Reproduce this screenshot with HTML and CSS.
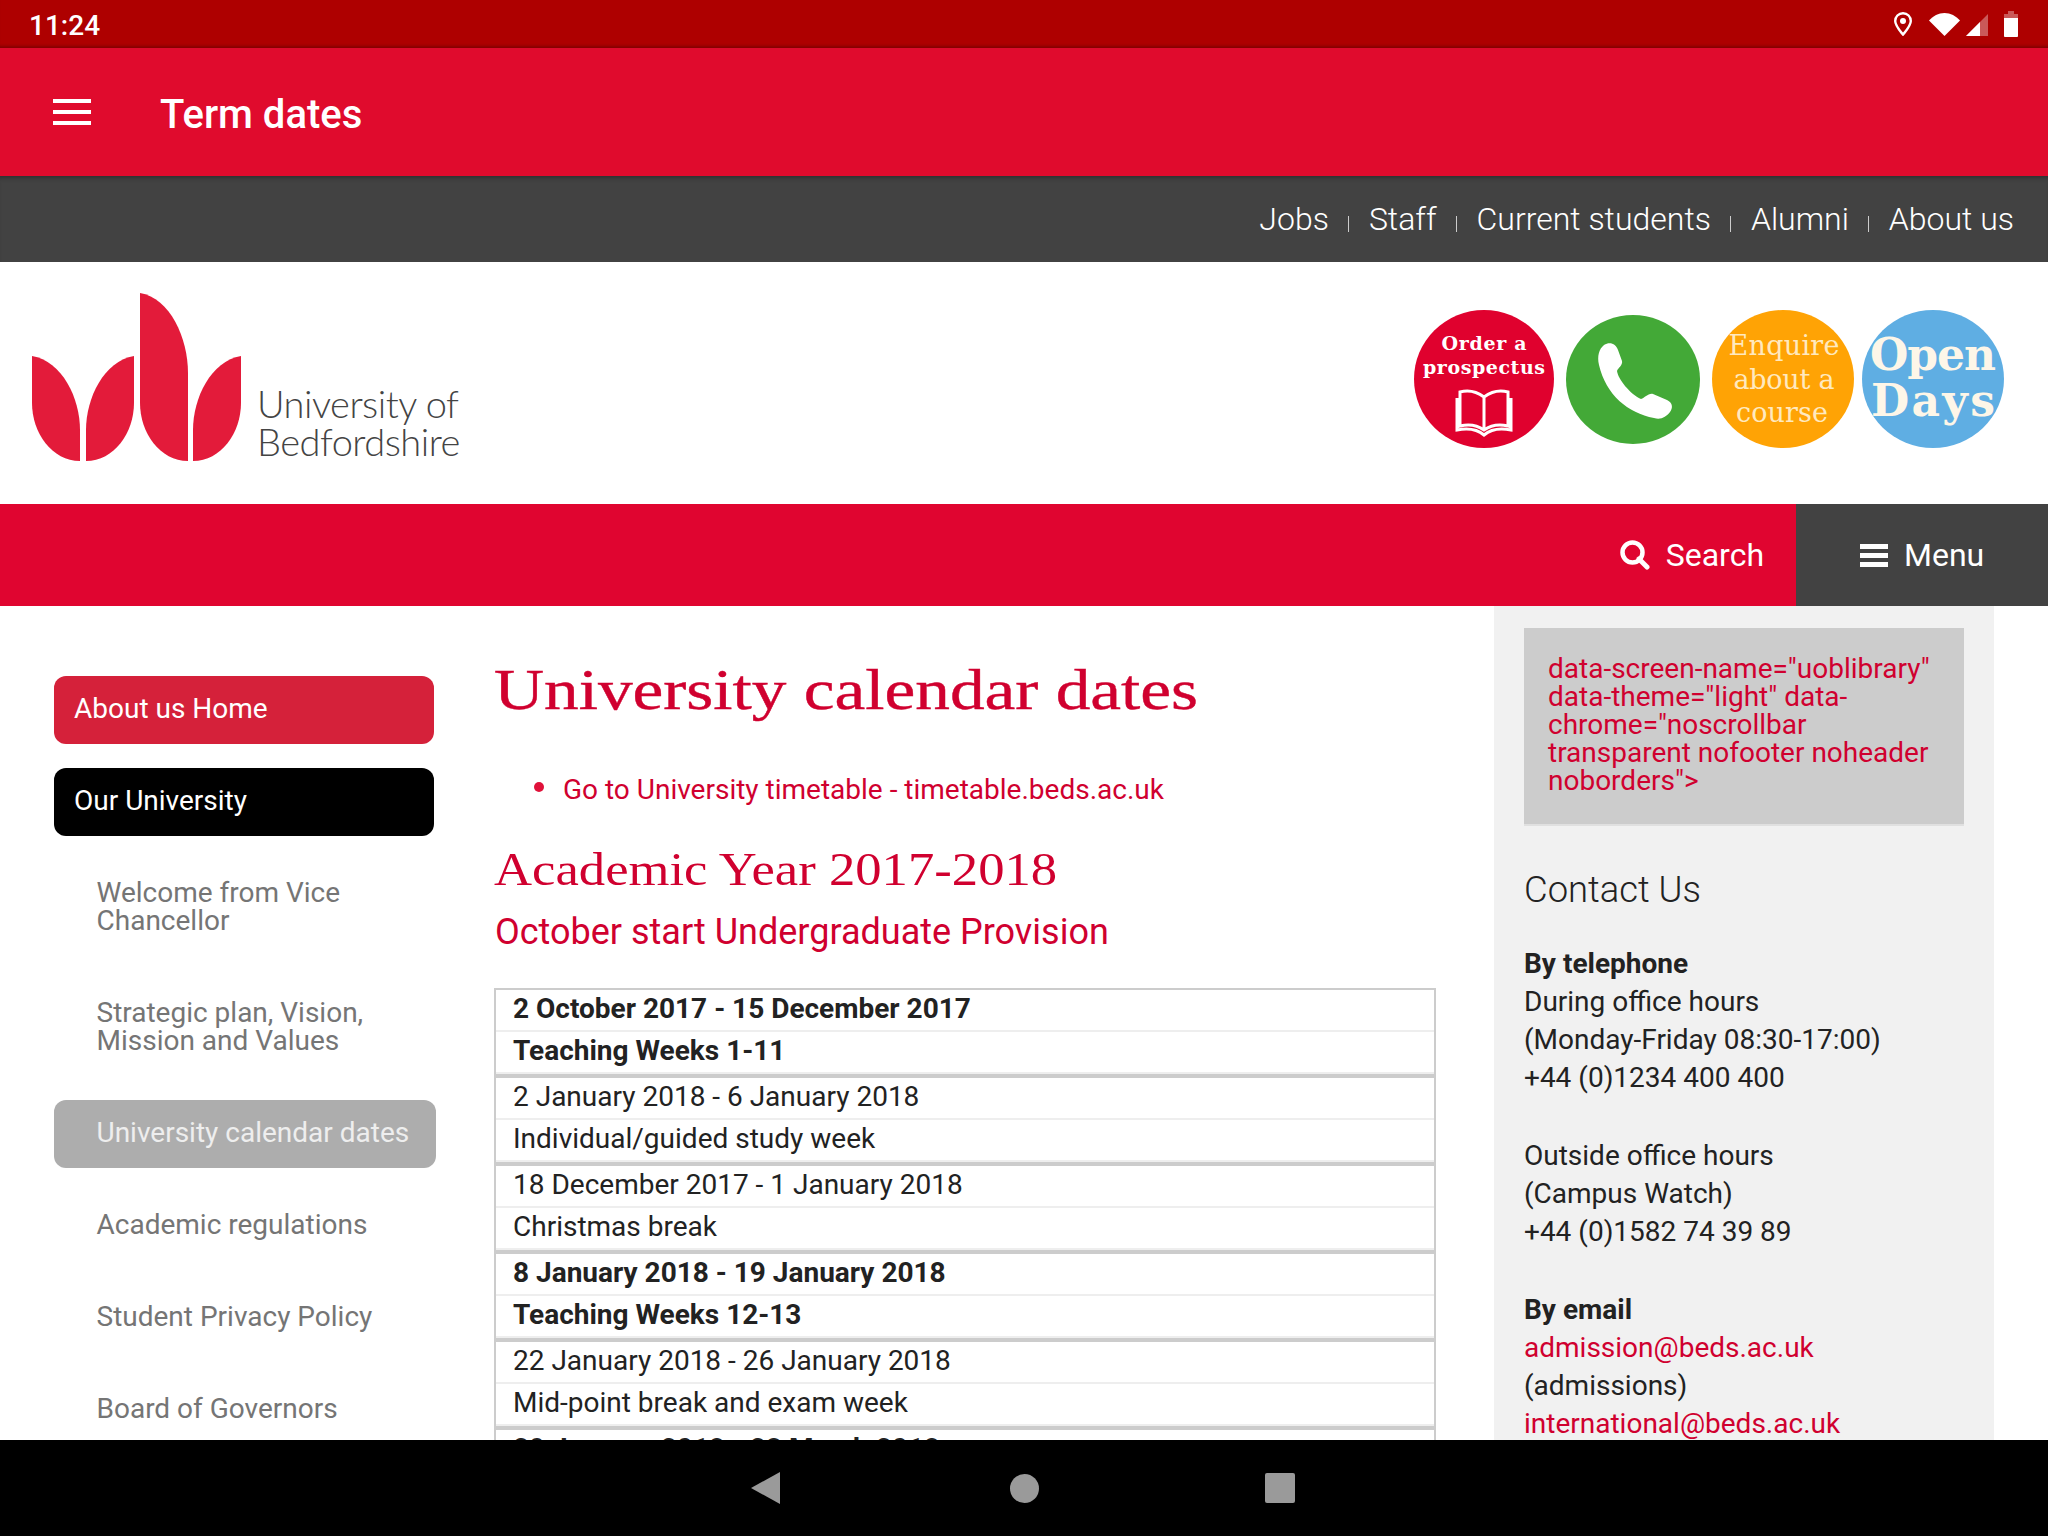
FILE: index.html
```html
<!DOCTYPE html>
<html lang="en">

<head>
    <meta charset="UTF-8">
    <title>Term dates</title>
    <link rel="stylesheet" href="styles.css">
</head>

<body>
    <div class="screen">
        <div class="status-bar">
            <span class="clock">11:24</span>
            <div class="status-icons">
                <svg class="ic-pin" viewBox="0 0 18 24"><path d="M9 1.2C4.5 1.2 1.2 4.7 1.2 9c0 4.6 4.6 9.6 7.8 13.6C12.200 18.600 16.800 13.600 16.800 9 16.800 4.700 13.500 1.200 9 1.200Z" fill="none" stroke="#fff" stroke-width="2.400"/><circle cx="9" cy="9" r="3" fill="#fff"/></svg>
                <svg class="ic-wifi" viewBox="0 0 31 23"><path d="M0 7.500C4 3 9.500 0 15.500 0S27 3 31 7.500L15.500 23Z" fill="#fff"/></svg>
                <svg class="ic-signal" viewBox="0 0 22 22"><path d="M0 22 22 0V22Z" fill="#fff" opacity=".35"/><path d="M0 22 14 8V22Z" fill="#fff"/></svg>
                <svg class="ic-battery" viewBox="0 0 14 26"><path d="M4 0H10V3H14V7H0V3H4Z" fill="#fff" opacity=".35"/><path d="M0 7H14V25C14 25.500 13.500 26 13 26H1C.5 26 0 25.500 0 25Z" fill="#fff"/></svg>
            </div>
        </div>

        <div class="app-bar">
            <div class="burger"><span></span><span></span><span></span></div>
            <div class="app-title">Term dates</div>
        </div>

        <div class="top-links">
            <a>Jobs</a><i></i><a>Staff</a><i></i><a>Current students</a><i></i><a>Alumni</a><i></i><a>About us</a>
        </div>

        <div class="masthead">
            <div class="logo">
                <svg class="logo-mark" viewBox="0 0 209 168">
                    <path d="M0 63C30 68 48 105 48 137V168C20 168 0 140 0 110Z" />
                    <path d="M102 63C72 68 54 105 54 137V168C82 168 102 140 102 110Z" />
                    <path d="M108 0C138 5 156 45 156 80V168C128 168 108 140 108 110Z" />
                    <path d="M209 63C179 68 161 105 161 137V168C189 168 209 140 209 110Z" />
                </svg>
                <div class="logo-text">University of<br>Bedfordshire</div>
            </div>
            <div class="badges">
                <svg class="badge-red" viewBox="0 0 140 138">
                    <ellipse cx="70" cy="69" rx="70" ry="69" fill="#e0012e" />
                    <text x="70" y="40" class="bd-small" text-anchor="middle" textLength="85">Order a</text>
                    <text x="70" y="64" class="bd-small" text-anchor="middle" textLength="122">prospectus</text>
                    <path d="M70 87C62 81 53 80 46 82V116C54 114 63 115 70 120C77 115 86 114 94 116V82C87 80 78 81 70 87ZM70 87V120M43 88V120C53 118 63 119 70 125C77 119 87 118 97 120V88" fill="none" stroke="#fff" stroke-width="3" />
                </svg>
                <svg class="badge-green" viewBox="0 0 134 129">
                    <ellipse cx="67" cy="64.500" rx="67" ry="64.500" fill="#43a937" />
                    <path d="M38 30C44 26 50 29 52 35L56 46C57 50 52 53 51 56C52 64 64 79 75 84C79 83 82 78 87 79L101 85C107 88 107 93 104 97C100 102 95 105 88 103C62 98 40 80 33 50C31 41 33 34 38 30Z" fill="#fff" />
                </svg>
                <svg class="badge-orange" viewBox="0 0 142 138">
                    <ellipse cx="71" cy="69" rx="71" ry="69" fill="#ffa305" />
                    <text x="72" y="45" class="bd-light" text-anchor="middle" textLength="111">Enquire</text>
                    <text x="72" y="79" class="bd-light" text-anchor="middle" textLength="101">about a</text>
                    <text x="70" y="112" class="bd-light" text-anchor="middle" textLength="92">course</text>
                </svg>
                <svg class="badge-blue" viewBox="0 0 142 138">
                    <ellipse cx="71" cy="69" rx="71" ry="69" fill="#5faee3" />
                    <text x="71" y="60" class="bd-big" text-anchor="middle" textLength="126">Open</text>
                    <text x="71" y="106" class="bd-big" text-anchor="middle" textLength="124">Days</text>
                </svg>
            </div>
        </div>

        <div class="red-bar">
            <div class="search-btn">
                <svg class="ic-search" viewBox="0 0 30 30"><circle cx="12.500" cy="12.500" r="10" fill="none" stroke="#fff" stroke-width="4.500"/><path d="M19 19 27 27" stroke="#fff" stroke-width="5" stroke-linecap="round"/></svg>
                Search
            </div>
            <div class="menu-btn">
                <div class="menu-lines"><span></span><span></span><span></span></div>
                Menu
            </div>
        </div>

        <div class="content">
            <nav class="side">
                <a class="side-item is-red">About us Home</a>
                <a class="side-item is-black">Our University</a>
                <a class="side-item sub">Welcome from Vice Chancellor</a>
                <a class="side-item sub">Strategic plan, Vision, Mission and Values</a>
                <a class="side-item sub is-current">University calendar dates</a>
                <a class="side-item sub">Academic regulations</a>
                <a class="side-item sub">Student Privacy Policy</a>
                <a class="side-item sub">Board of Governors</a>
            </nav>

            <main class="main">
                <h1>University calendar dates</h1>
                <ul class="links">
                    <li>Go to University timetable - timetable.beds.ac.uk</li>
                </ul>
                <h2>Academic Year 2017-2018</h2>
                <h3>October start Undergraduate Provision</h3>
                <table class="dates">
                    <tr class="strong"><td>2 October 2017 - 15 December 2017</td></tr>
                    <tr class="strong end"><td>Teaching Weeks 1-11</td></tr>
                    <tr><td>2 January 2018 - 6 January 2018</td></tr>
                    <tr class="end"><td>Individual/guided study week</td></tr>
                    <tr><td>18 December 2017 - 1 January 2018</td></tr>
                    <tr class="end"><td>Christmas break</td></tr>
                    <tr class="strong"><td>8 January 2018 - 19 January 2018</td></tr>
                    <tr class="strong end"><td>Teaching Weeks 12-13</td></tr>
                    <tr><td>22 January 2018 - 26 January 2018</td></tr>
                    <tr class="end"><td>Mid-point break and exam week</td></tr>
                    <tr class="strong"><td>29 January 2018 - 23 March 2018</td></tr>
                </table>
            </main>

            <aside class="aside">
                <div class="embed">data-screen-name="uoblibrary" data-theme="light" data-chrome="noscrollbar transparent nofooter noheader noborders"&gt;</div>
                <h4>Contact Us</h4>
                <p><b>By telephone</b><br>During office hours<br>(Monday-Friday 08:30-17:00)<br>+44 (0)1234 400 400</p>
                <p>Outside office hours<br>(Campus Watch)<br>+44 (0)1582 74 39 89</p>
                <p><b>By email</b><br><a>admission@beds.ac.uk</a><br>(admissions)<br><a>international@beds.ac.uk</a></p>
            </aside>
        </div>

        <div class="nav-bar">
            <svg class="nav-back" viewBox="0 0 29 32"><path d="M29 0V32L0 16Z" /></svg>
            <span class="nav-home"></span>
            <span class="nav-recent"></span>
        </div>
    </div>
</body>

</html>
```

FILE: styles.css
```css
* {
    box-sizing: border-box;
}

body {
    margin: 0;
    font-family: 'Roboto', sans-serif;
    color: #222;
    background-color: #fff;
}

.screen {
    width: 2048px;
    height: 1536px;
    display: flex;
    flex-direction: column;
    overflow: hidden;
}

/* status bar */
.status-bar {
    height: 48px;
    flex: none;
    background-color: #ae0000;
    box-shadow: inset 0 -4px 3px -2px rgba(0, 0, 0, 0.25);
    display: flex;
    align-items: center;
    justify-content: space-between;
    padding: 0 30px 0 29px;
    color: #fff;
}

.clock {
    margin-top: 2px;
    font-size: 28px;
    font-weight: 500;
}

.status-icons {
    display: flex;
    align-items: center;
}

.ic-pin {
    width: 18px;
    height: 24px;
    margin-right: 17px;
}

.ic-wifi {
    width: 31px;
    height: 23px;
    margin-right: 6px;
}

.ic-signal {
    width: 22px;
    height: 22px;
    margin-right: 16px;
    margin-top: 2px;
}

.ic-battery {
    width: 14px;
    height: 26px;
}

/* app bar */
.app-bar {
    height: 128px;
    flex: none;
    background-color: #e00b2d;
    display: flex;
    align-items: center;
    color: #fff;
}

.burger {
    width: 38px;
    margin-left: 53px;
    margin-right: 69px;
    display: flex;
    flex-direction: column;
    gap: 7px;
}

.burger span {
    height: 4px;
    background-color: #fff;
}

.app-title {
    margin-top: 5px;
    font-size: 40px;
    font-weight: 500;
}

/* links on dark bar */
.top-links {
    height: 86px;
    flex: none;
    background-color: #424242;
    box-shadow: inset 0 5px 4px -3px rgba(0, 0, 0, 0.3);
    display: flex;
    align-items: center;
    justify-content: flex-end;
    padding-right: 34px;
    color: #fff;
    font-size: 32px;
    font-weight: 300;
}

.top-links i {
    width: 1px;
    height: 16px;
    margin: 10px 19.5px 0;
    background-color: #ccc;
}

/* logo row */
.masthead {
    height: 242px;
    flex: none;
    display: flex;
    justify-content: space-between;
    padding: 31px 44px 0 32px;
}

.logo {
    display: flex;
    align-items: flex-end;
    height: 168px;
}

.logo-mark {
    width: 209px;
    height: 168px;
    fill: #e31b3a;
}

.logo-text {
    margin-left: 16px;
    margin-bottom: 1px;
    font-family: 'Lato', sans-serif;
    font-weight: 300;
    font-size: 38px;
    line-height: 38px;
    color: #444;
    letter-spacing: -0.5px;
}

.badges {
    display: flex;
    align-items: center;
    margin-top: 17px;
    height: 138px;
}

.badge-red {
    width: 140px;
    height: 138px;
    margin-right: 12px;
}

.badge-green {
    width: 134px;
    height: 129px;
    margin-right: 12px;
}

.badge-orange {
    width: 142px;
    height: 138px;
    margin-right: 8px;
}

.badge-blue {
    width: 142px;
    height: 138px;
}

.bd-small {
    font-family: 'DejaVu Serif', serif;
    font-weight: 700;
    font-size: 19px;
    fill: #fff;
}

.bd-light {
    font-family: 'DejaVu Serif', serif;
    font-size: 27px;
    fill: #ffe9bf;
}

.bd-big {
    font-family: 'DejaVu Serif', serif;
    font-weight: 700;
    font-size: 44px;
    fill: #fdf6e8;
}

/* search and menu bar */
.red-bar {
    height: 102px;
    flex: none;
    background-color: #e00530;
    display: flex;
    justify-content: flex-end;
    color: #fff;
    font-size: 32px;
}

.search-btn,
.menu-btn {
    display: flex;
    align-items: center;
}

.search-btn {
    padding-right: 32px;
}

.ic-search {
    width: 30px;
    height: 30px;
    margin-right: 16px;
}

.menu-btn {
    width: 252px;
    padding-left: 64px;
    background-color: #424242;
}

.menu-lines {
    width: 28px;
    margin-right: 16px;
    display: flex;
    flex-direction: column;
    gap: 4px;
}

.menu-lines span {
    height: 5px;
    background-color: #fff;
}

/* three columns */
.content {
    flex: 1;
    min-height: 0;
    overflow: hidden;
    display: flex;
    padding-left: 54px;
}

.side {
    width: 382px;
    flex: none;
    padding-top: 70px;
}

.side-item {
    display: block;
    width: 380px;
    padding: 19px 20px 21px;
    margin-bottom: 24px;
    border-radius: 12px;
    font-size: 28px;
    line-height: 28px;
    color: #fff;
}

.is-red {
    background-color: #d5213a;
}

.is-black {
    background-color: #000;
}

.sub {
    padding-left: 42.5px;
    color: #757575;
}

.sub.is-current {
    width: 382px;
    background-color: #adadad;
    color: #eee;
}

.main {
    width: 942px;
    flex: none;
    margin-left: 58px;
    color: #d0002f;
}

h1 {
    margin: 0;
    padding-top: 54px;
    font-family: 'Liberation Serif', serif;
    font-weight: 400;
    font-size: 56px;
    line-height: 60px;
    white-space: nowrap;
    -webkit-text-stroke: 0.4px #d0002f;
    transform: scaleX(1.237);
    transform-origin: left;
}

.links {
    list-style: none;
    margin: 52px 0 0;
    padding-left: 40px;
    font-size: 28px;
    line-height: 36px;
}

.links li {
    display: flex;
    align-items: center;
}

.links li::before {
    content: "";
    width: 10px;
    height: 10px;
    margin-right: 19px;
    margin-bottom: 6px;
    border-radius: 50%;
    background-color: #e0123a;
}

h2 {
    margin: 37px 0 0;
    font-family: 'Liberation Serif', serif;
    font-weight: 400;
    font-size: 46px;
    line-height: 50px;
    white-space: nowrap;
    transform: scaleX(1.145);
    transform-origin: left;
}

h3 {
    margin: 15px 0 0;
    padding-left: 1px;
    font-weight: 400;
    font-size: 36px;
    line-height: 44px;
}

.dates {
    width: 942px;
    margin-top: 34px;
    border-collapse: separate;
    border-spacing: 0;
    border: 2px solid #ccc;
    color: #222;
    font-size: 28px;
}

.dates td {
    height: 42px;
    padding: 0 17px;
    line-height: 38px;
    vertical-align: top;
    box-shadow: inset 0 -2px 0 #eee;
}

.dates .strong td {
    font-weight: 700;
}

.dates .end td {
    height: 46px;
    border-bottom: 4px solid #ccc;
}

/* right hand column */
.aside {
    width: 500px;
    flex: none;
    margin-left: 58px;
    padding: 22px 30px 0;
    background-color: #f1f1f1;
    font-size: 28px;
    line-height: 38px;
}

.embed {
    height: 198px;
    padding: 27px 24px 0;
    background-color: #ccc;
    border-bottom: 2px solid #e0e0e0;
    color: #d0002f;
    line-height: 28px;
}

h4 {
    margin: 42px 0 0;
    font-weight: 300;
    font-size: 36.4px;
    line-height: 44px;
}

.aside p {
    margin: 0 0 40px;
}

.aside h4 + p {
    margin-top: 33px;
}

.aside a {
    color: #d0002f;
}

/* android buttons */
.nav-bar {
    height: 96px;
    flex: none;
    background-color: #000;
    display: flex;
    align-items: center;
    padding-left: 751px;
}

.nav-back {
    width: 29px;
    height: 32px;
    fill: #9a9a9a;
    margin-right: 230px;
}

.nav-home {
    width: 29px;
    height: 29px;
    border-radius: 50%;
    background-color: #9a9a9a;
    margin-right: 226px;
}

.nav-recent {
    width: 30px;
    height: 30px;
    border-radius: 2px;
    background-color: #9a9a9a;
}
```
